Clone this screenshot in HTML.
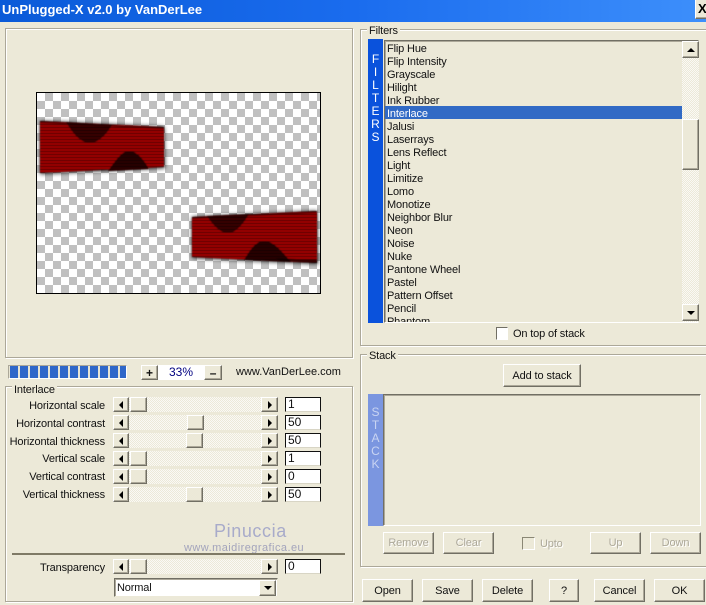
<!DOCTYPE html>
<html><head><meta charset="utf-8"><title>UnPlugged-X</title>
<style>
html,body{margin:0;padding:0;background:#ece9d8}
body{width:706px;height:605px;position:relative;overflow:hidden;font:11px/14px "Liberation Sans",sans-serif;color:#111}
div,span{position:absolute;box-sizing:border-box}
.t{white-space:nowrap;line-height:14px;letter-spacing:-.15px}
.r{text-align:right;width:110px;left:-5px}
.g{border:1px solid #aca899;box-shadow:inset 1px 1px 0 #fff,1px 1px 0 #fff}
.b{background:#ece9d8;border:1px solid;border-color:#fff #716f64 #716f64 #fff;box-shadow:inset -1px -1px 0 #aca899;text-align:center;display:flex;align-items:center;justify-content:center;white-space:nowrap;font-size:11px;letter-spacing:-.1px}
.b.d{color:#aca899;text-shadow:1px 1px 0 #fff}
.tr{background-color:#ece9d8;background-image:conic-gradient(#fff 25%,transparent 0 50%,#fff 0 75%,transparent 0);background-size:2px 2px;opacity:.75}
.e{background:#fff;border:1px solid #111;border-bottom-color:#d8d5c5;padding-left:2px;line-height:13px;font-size:12px;left:285px;width:36px;height:15px}
.la,.ra,.ua,.da{width:0;height:0;position:static;display:block}
.la{border:4px solid transparent;border-left:0;border-right:4px solid #000}
.ra{border:4px solid transparent;border-right:0;border-left:4px solid #000}
.ua{border:4px solid transparent;border-top:0;border-bottom:4px solid #000}
.da{border:4px solid transparent;border-bottom:0;border-top:4px solid #000}
.li{left:387px;height:13px;line-height:13px;white-space:nowrap;font-size:11px;margin-top:2px;letter-spacing:-.15px}
.v{left:368px;width:15px;text-align:center;font-size:12px;line-height:13px;color:#fff}
</style></head><body>

<div style="left:0;top:0;width:706px;height:22px;background:linear-gradient(90deg,#0a5ad8,#1a6cee 50%,#3d8ffb)"></div>
<div class="t" style="left:2px;top:2px;font:bold 13px/16px 'Liberation Sans',sans-serif;color:#fff;letter-spacing:0">UnPlugged-X v2.0 by VanDerLee</div>
<div class="b" style="left:695px;top:-2px;width:14px;height:21px;font:bold 13px/13px 'Liberation Sans',sans-serif;color:#000;justify-content:flex-start;padding-left:2px;letter-spacing:0">X</div>

<div class="g" style="left:5px;top:28px;width:348px;height:330px"></div>
<svg style="position:absolute;left:36px;top:92px" width="285" height="202" viewBox="36 92 285 202">
<defs>
<pattern id="ck" x="37" y="93" width="16" height="16" patternUnits="userSpaceOnUse">
<rect width="16" height="16" fill="#fff"/><rect x="8" width="8" height="8" fill="#c0c0c0"/><rect y="8" width="8" height="8" fill="#c0c0c0"/>
</pattern>
<pattern id="st" x="0" y="0" width="3" height="3" patternUnits="userSpaceOnUse">
<rect y="1" width="3" height="1" fill="#000" fill-opacity=".7"/>
</pattern>
<filter id="bl" x="-10%" y="-20%" width="120%" height="140%"><feGaussianBlur stdDeviation="2"/></filter>
<filter id="s1" x="-5%" y="-5%" width="110%" height="110%"><feGaussianBlur stdDeviation=".45"/></filter>
</defs>
<rect x="36" y="92" width="285" height="202" fill="url(#ck)"/>
<polygon points="40,121 164,127 165,168 40,174" fill="#000" filter="url(#bl)" opacity=".85"/>
<polygon points="192,217 317,211 318,264 192,258" fill="#000" filter="url(#bl)" opacity=".85"/>
<g filter="url(#s1)">
<polygon points="40,121 164,127 164,167 40,173" fill="#a00006"/>
<path d="M66,122 L112,125 C106,135 98,143 90,143 C80,143 72,132 66,122Z" fill="#3a0000"/>
<path d="M108,171 C116,160 122,151 129,151 C137,151 144,160 149,169Z" fill="#2c0000"/>
<path d="M40,121 L66,122 L112,125 L164,127 L164,129 L40,123Z" fill="#2a0000" opacity=".5"/>
<polygon points="192,217 317,211 317,263 192,257" fill="#a00006"/>
<path d="M207,216 L249,214 C243,224 236,233 228,233 C220,233 213,225 207,216Z" fill="#3a0000"/>
<path d="M244,260 C250,250 256,241 264,241 C274,241 282,252 291,262Z" fill="#2c0000"/>
<path d="M192,217 L317,211 L317,213 L192,219Z" fill="#2a0000" opacity=".5"/>
<path d="M280,261 L317,263 L317,260 L276,258Z" fill="#100000" opacity=".7"/>
<polygon points="40,121 164,127 164,167 40,173" fill="url(#st)"/>
<polygon points="192,217 317,211 317,263 192,257" fill="url(#st)"/>
</g>
<rect x="36.5" y="92.5" width="284" height="201" fill="none" stroke="#000"/>
</svg>

<!-- Progress/zoom -->
<div style="left:8px;top:365px;width:119px;height:14px;background:#e8e5d4;border:1px solid;border-color:#aca899 #fff #fff #aca899"></div>
<div style="left:10px;top:366px;width:116px;height:12px;background:repeating-linear-gradient(90deg,#2f67c9 0 8px,#e8e5d4 8px 10px)"></div>
<div class="b" style="left:141px;top:365px;width:17px;height:15px;font:bold 12px/12px 'Liberation Sans',sans-serif">+</div>
<div style="left:158px;top:365px;width:46px;height:15px;background:#fff;text-align:center;color:#000080;font-size:12px;line-height:15px">33%</div>
<div class="b" style="left:204px;top:365px;width:18px;height:15px;font:bold 12px/12px 'Liberation Sans',sans-serif">–</div>
<div class="t" style="left:236px;top:365px;font-size:11px;letter-spacing:0">www.VanDerLee.com</div>

<!-- Interlace -->
<div class="g" style="left:5px;top:386px;width:348px;height:216px"></div>
<div class="t" style="left:12px;top:383px;background:#ece9d8;padding:0 2px">Interlace</div>

<div class="t r" style="top:399px">Horizontal scale</div>
<div class="t r" style="top:417px">Horizontal contrast</div>
<div class="t r" style="top:435px">Horizontal thickness</div>
<div class="t r" style="top:452px">Vertical scale</div>
<div class="t r" style="top:470px">Vertical contrast</div>
<div class="t r" style="top:488px">Vertical thickness</div>
<div class="t r" style="top:561px">Transparency</div>

<div class="tr" style="left:129px;top:397px;width:132px;height:15px"></div>
<div class="tr" style="left:129px;top:415px;width:132px;height:15px"></div>
<div class="tr" style="left:129px;top:433px;width:132px;height:15px"></div>
<div class="tr" style="left:129px;top:451px;width:132px;height:15px"></div>
<div class="tr" style="left:129px;top:469px;width:132px;height:15px"></div>
<div class="tr" style="left:129px;top:487px;width:132px;height:15px"></div>
<div class="tr" style="left:129px;top:559px;width:132px;height:15px"></div>

<div class="b" style="left:113px;top:397px;width:16px;height:15px"><i class="la"></i></div>
<div class="b" style="left:113px;top:415px;width:16px;height:15px"><i class="la"></i></div>
<div class="b" style="left:113px;top:433px;width:16px;height:15px"><i class="la"></i></div>
<div class="b" style="left:113px;top:451px;width:16px;height:15px"><i class="la"></i></div>
<div class="b" style="left:113px;top:469px;width:16px;height:15px"><i class="la"></i></div>
<div class="b" style="left:113px;top:487px;width:16px;height:15px"><i class="la"></i></div>
<div class="b" style="left:113px;top:559px;width:16px;height:15px"><i class="la"></i></div>

<div class="b" style="left:130px;top:397px;width:17px;height:15px"></div>
<div class="b" style="left:187px;top:415px;width:17px;height:15px"></div>
<div class="b" style="left:186px;top:433px;width:17px;height:15px"></div>
<div class="b" style="left:130px;top:451px;width:17px;height:15px"></div>
<div class="b" style="left:130px;top:469px;width:17px;height:15px"></div>
<div class="b" style="left:186px;top:487px;width:17px;height:15px"></div>
<div class="b" style="left:130px;top:559px;width:17px;height:15px"></div>

<div class="b" style="left:261px;top:397px;width:17px;height:15px"><i class="ra"></i></div>
<div class="b" style="left:261px;top:415px;width:17px;height:15px"><i class="ra"></i></div>
<div class="b" style="left:261px;top:433px;width:17px;height:15px"><i class="ra"></i></div>
<div class="b" style="left:261px;top:451px;width:17px;height:15px"><i class="ra"></i></div>
<div class="b" style="left:261px;top:469px;width:17px;height:15px"><i class="ra"></i></div>
<div class="b" style="left:261px;top:487px;width:17px;height:15px"><i class="ra"></i></div>
<div class="b" style="left:261px;top:559px;width:17px;height:15px"><i class="ra"></i></div>

<div class="e" style="top:397px">1</div>
<div class="e" style="top:415px">50</div>
<div class="e" style="top:433px">50</div>
<div class="e" style="top:451px">1</div>
<div class="e" style="top:469px">0</div>
<div class="e" style="top:487px">50</div>
<div class="e" style="top:559px">0</div>

<div class="t" style="left:214px;top:521px;font:18px/20px 'Liberation Sans',sans-serif;color:#a8abca;letter-spacing:.6px">Pinuccia</div>
<div class="t" style="left:184px;top:541px;font-size:11px;color:#a3a4bc;letter-spacing:.45px">www.maidiregrafica.eu</div>
<div style="left:12px;top:553px;width:333px;height:2px;background:#7f7a66"></div>

<div style="left:114px;top:578px;width:164px;height:19px;background:#fff;border:1px solid;border-color:#716f64 #ece9d8 #ece9d8 #716f64;box-shadow:inset 1px 1px 0 #aca899"></div>
<div class="t" style="left:117px;top:581px;font-size:11px">Normal</div>
<div class="b" style="left:259px;top:580px;width:17px;height:16px"><i class="da"></i></div>

<!-- Filters -->
<div class="g" style="left:360px;top:29px;width:360px;height:317px"></div>
<div class="t" style="left:367px;top:24px;background:#ece9d8;padding:0 2px">Filters</div>
<div style="left:368px;top:39px;width:15px;height:284px;background:#0a52dc"></div>
<div class="v" style="top:53px">F</div><div class="v" style="top:66px">I</div><div class="v" style="top:79px">L</div><div class="v" style="top:92px">T</div><div class="v" style="top:105px">E</div><div class="v" style="top:118px">R</div><div class="v" style="top:131px">S</div>

<div style="left:384px;top:40px;width:315px;height:283px;background:#ece9d8;overflow:hidden;border:1px solid;border-color:#716f64 transparent #fff #716f64;box-shadow:inset 1px 1px 0 #aca899"></div>
<div style="left:385px;top:106px;width:297px;height:13px;background:#316ac5"></div>
<div style="left:385px;top:41px;width:297px;height:281px;overflow:hidden">
<div class="li" style="left:2px;top:0">Flip Hue</div>
<div class="li" style="left:2px;top:13px">Flip Intensity</div>
<div class="li" style="left:2px;top:26px">Grayscale</div>
<div class="li" style="left:2px;top:39px">Hilight</div>
<div class="li" style="left:2px;top:52px">Ink Rubber</div>
<div class="li" style="left:2px;top:65px;color:#fff">Interlace</div>
<div class="li" style="left:2px;top:78px">Jalusi</div>
<div class="li" style="left:2px;top:91px">Laserrays</div>
<div class="li" style="left:2px;top:104px">Lens Reflect</div>
<div class="li" style="left:2px;top:117px">Light</div>
<div class="li" style="left:2px;top:130px">Limitize</div>
<div class="li" style="left:2px;top:143px">Lomo</div>
<div class="li" style="left:2px;top:156px">Monotize</div>
<div class="li" style="left:2px;top:169px">Neighbor Blur</div>
<div class="li" style="left:2px;top:182px">Neon</div>
<div class="li" style="left:2px;top:195px">Noise</div>
<div class="li" style="left:2px;top:208px">Nuke</div>
<div class="li" style="left:2px;top:221px">Pantone Wheel</div>
<div class="li" style="left:2px;top:234px">Pastel</div>
<div class="li" style="left:2px;top:247px">Pattern Offset</div>
<div class="li" style="left:2px;top:260px">Pencil</div>
<div class="li" style="left:2px;top:273px">Phantom</div>
</div>
<div class="tr" style="left:682px;top:41px;width:17px;height:281px"></div>
<div class="b" style="left:682px;top:41px;width:17px;height:17px"><i class="ua"></i></div>
<div class="b" style="left:682px;top:119px;width:17px;height:51px"></div>
<div class="b" style="left:682px;top:304px;width:17px;height:17px"><i class="da"></i></div>

<div style="left:496px;top:327px;width:12px;height:13px;background:#fff;border:1px solid;border-color:#716f64 #fff #fff #716f64"></div>
<div class="t" style="left:513px;top:327px">On top of stack</div>

<!-- Stack -->
<div class="g" style="left:360px;top:354px;width:360px;height:213px"></div>
<div class="t" style="left:367px;top:349px;background:#ece9d8;padding:0 2px">Stack</div>
<div class="b" style="left:503px;top:364px;width:78px;height:23px">Add to stack</div>
<div style="left:368px;top:394px;width:15px;height:132px;background:#7b96e0"></div>
<div class="v" style="top:406px;color:#c9d4f2">S</div><div class="v" style="top:419px;color:#c9d4f2">T</div><div class="v" style="top:432px;color:#c9d4f2">A</div><div class="v" style="top:445px;color:#c9d4f2">C</div><div class="v" style="top:458px;color:#c9d4f2">K</div>
<div style="left:383px;top:394px;width:318px;height:132px;border:1px solid;border-color:#716f64 #fff #fff #716f64;box-shadow:inset 1px 1px 0 #aca899"></div>

<div class="b d" style="left:383px;top:532px;width:51px;height:22px">Remove</div>
<div class="b d" style="left:443px;top:532px;width:51px;height:22px">Clear</div>
<div style="left:522px;top:537px;width:13px;height:13px;border:1px solid;border-color:#8a8775 #fff #fff #8a8775"></div>
<div class="t" style="left:540px;top:537px;color:#aca899;text-shadow:1px 1px 0 #fff">Upto</div>
<div class="b d" style="left:590px;top:532px;width:51px;height:22px">Up</div>
<div class="b d" style="left:650px;top:532px;width:51px;height:22px">Down</div>

<div class="b" style="left:362px;top:579px;width:51px;height:23px">Open</div>
<div class="b" style="left:422px;top:579px;width:51px;height:23px">Save</div>
<div class="b" style="left:482px;top:579px;width:51px;height:23px">Delete</div>
<div class="b" style="left:549px;top:579px;width:30px;height:23px">?</div>
<div class="b" style="left:594px;top:579px;width:51px;height:23px">Cancel</div>
<div class="b" style="left:654px;top:579px;width:51px;height:23px">OK</div>
</body></html>
